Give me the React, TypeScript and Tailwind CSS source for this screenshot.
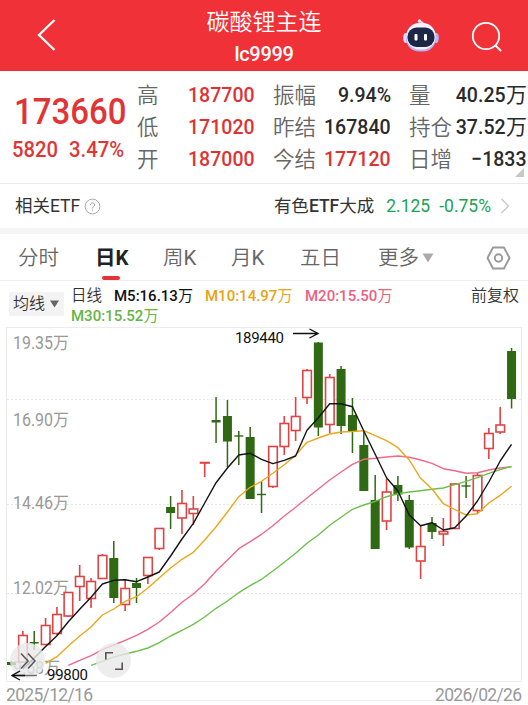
import React from 'react';

interface Candle {
  up: boolean;
  top: number;
  bottom: number;
  high: number;
  low: number;
}

interface Quote {
  label: string;
  value: string;
  unit?: string;
  color: string;
}

const STEP = 11.365;
const START = 11.5;

const xAt = (i: number) => START + i * STEP;

// [up, body top, body bottom, wick top, wick bottom]
const rawCandles: [number, number, number, number, number][] = [
  [0, 662, 665, 661, 666],
  [1, 635.5, 662, 631, 663],
  [0, 642, 643.5, 631, 650],
  [1, 625.5, 644.5, 618, 645],
  [1, 614.5, 633.5, 607, 635],
  [1, 592.5, 616, 592, 617],
  [1, 576.5, 586.5, 565, 601],
  [1, 581.5, 598.5, 578, 608],
  [1, 555.5, 578.5, 554, 579],
  [0, 558, 598, 541, 603],
  [1, 588.5, 604.5, 580, 611],
  [0, 583, 588, 578, 603],
  [1, 557.5, 575.5, 557, 584],
  [1, 528.5, 548.5, 528, 550],
  [0, 507, 513, 496, 529],
  [1, 503.5, 518, 490, 534],
  [1, 509, 513.5, 496, 525],
  [1, 462.5, 463, 462, 477],
  [0, 420, 422.5, 397, 443],
  [0, 416, 441.5, 400, 467],
  [0, 435.3, 436.7, 431, 465],
  [0, 437, 499, 427, 499],
  [0, 493.8, 495.2, 481, 513],
  [1, 446.5, 486.5, 446, 488],
  [1, 423.5, 446.5, 416, 455],
  [1, 416.5, 430.5, 397, 441],
  [1, 370.5, 397.5, 369, 404],
  [0, 342.5, 427.5, 342, 436],
  [1, 377.5, 424.5, 374, 433],
  [0, 369, 426, 366, 434],
  [0, 415, 431, 398, 453],
  [0, 445, 491, 431, 491],
  [0, 500, 549, 475, 549],
  [1, 492, 521, 479, 530],
  [0, 485, 494.5, 476, 501],
  [0, 500, 547.5, 495, 549],
  [1, 546.5, 561, 526, 579],
  [0, 523, 532, 517, 539],
  [1, 531.5, 534, 518, 546],
  [1, 484, 528.5, 483, 529],
  [0, 485.3, 486.7, 476, 498],
  [1, 475.5, 510.5, 473, 513],
  [1, 433.5, 448.5, 428, 459],
  [1, 425, 432, 407, 434],
  [0, 351, 399, 348, 408.5],
];

const candles: Candle[] = rawCandles.map(([up, top, bottom, high, low]) => ({ up: up === 1, top, bottom, high, low }));

const averages = [
  {
    color: '#f0688a',
    from: 5,
    ys: [665.3, 660.3, 655.7, 649.7, 645, 640.3, 635.3, 629.3, 622, 612.5, 602.3, 594, 583.7, 571, 560, 548.7, 541.7, 534.3, 525.7, 516, 507.3, 498, 489, 480, 472, 464.3, 459.3, 458.3, 457, 456, 457.3, 460, 463.3, 468.7, 470.7, 473.3, 472.7, 470, 468, 466.7],
  },
  {
    color: '#6cc04a',
    from: 7,
    ys: [665.3, 661.3, 657, 654, 651.3, 648, 642.7, 636, 630.3, 624.3, 617, 608.3, 601, 592.7, 585.7, 579.3, 571, 562.3, 553.3, 543.3, 535, 525.3, 517.3, 509.3, 505, 501.3, 496.7, 493.7, 492, 490.7, 489.3, 488, 484.7, 481.3, 477.7, 473.3, 469.7, 466.3],
  },
  {
    color: '#e9a71b',
    from: 3,
    ys: [663.3, 656.7, 646, 636, 627, 615, 609, 601.3, 596.7, 588, 578, 568, 559.3, 552.3, 540, 526.7, 512, 496.7, 487.3, 481.3, 473.3, 464.7, 455.3, 442.3, 438, 434, 432, 431.5, 430.7, 435.7, 440.7, 447.7, 460, 478.3, 489, 503.7, 509.5, 515, 513.7, 503, 495.3, 486.3],
  },
  {
    color: '#141414',
    from: 1,
    ys: [669, 658, 646.5, 635.7, 621.7, 609.3, 597.3, 584, 580.3, 579.7, 581.7, 577, 572, 556, 539, 523.3, 503, 482.7, 468, 455, 453.3, 459.3, 463.7, 460.3, 456, 430.3, 417.7, 403.7, 403.7, 406.7, 431, 454.3, 477.7, 491, 515, 525.7, 522.7, 530, 527.7, 516, 501, 482, 461, 444.3],
  },
];

const quotes: Quote[][] = [
  [
    { label: '高', value: '187700', color: 'text-[#dc3435]' },
    { label: '低', value: '171020', color: 'text-[#dc3435]' },
    { label: '开', value: '187000', color: 'text-[#dc3435]' },
  ],
  [
    { label: '振幅', value: '9.94%', color: 'text-[#2a2a2a]' },
    { label: '昨结', value: '167840', color: 'text-[#2a2a2a]' },
    { label: '今结', value: '177120', color: 'text-[#dc3435]' },
  ],
  [
    { label: '量', value: '40.25', unit: '万', color: 'text-[#2a2a2a]' },
    { label: '持仓', value: '37.52', unit: '万', color: 'text-[#2a2a2a]' },
    { label: '日增', value: '−1833', color: 'text-[#2a2a2a]' },
  ],
];

const columnClass = ['w-[118px]', 'ml-[18px] w-[118px]', 'ml-[18px] w-[118px]'];

const priceLabels = [
  { y: 349, value: '19.35', width: 56 },
  { y: 425.5, value: '16.90', width: 56 },
  { y: 509, value: '14.46', width: 56 },
  { y: 593.5, value: '12.02', width: 56 },
  { y: 674, value: '9.58', width: 47 },
];

const RobotIcon: React.FC = () => (
  <svg width="38" height="36" viewBox="0 0 38 36" fill="none">
    <path d="M22 8C22 4.500 20 3.500 16.500 3.500" stroke="#f3d3ea" strokeWidth="1.500" strokeLinecap="round" />
    <circle cx="17.500" cy="3" r="1.700" fill="#fbe9f4" />
    <ellipse cx="4" cy="20" rx="2.800" ry="5" fill="#dcd8fb" />
    <ellipse cx="34" cy="20" rx="2.800" ry="5" fill="#b9b4f5" />
    <rect x="4" y="6" width="30" height="27.500" rx="13" fill="#b7b0f5" />
    <rect x="4.500" y="5" width="29" height="26.500" rx="12.500" fill="#f3f1ff" />
    <rect x="5.500" y="9.500" width="27" height="19.500" rx="9" fill="#1c2748" />
    <rect x="12.500" y="16" width="3" height="6.500" rx="1" fill="#fff" />
    <rect x="22" y="16" width="3" height="6.500" rx="1" fill="#fff" />
  </svg>
);

const Header: React.FC = () => (
  <header className="flex h-[71px] items-center bg-[#f13138] text-white">
    <button className="flex w-[158px] pl-[36px]">
      <svg width="20" height="33" viewBox="0 0 20 33" fill="none">
        <path d="M18.500 1L3 16L18.500 31" stroke="#fff" strokeWidth="2.300" />
      </svg>
    </button>
    <div className="flex w-[212px] flex-col items-center pt-[5px]">
      <h1 className="text-[23px] leading-[32px] font-[350]">碳酸锂主连</h1>
      <span className="text-[20px] leading-[30px] font-medium tracking-[-0.3px]">lc9999</span>
    </div>
    <div className="ml-[32px] flex items-center">
      <RobotIcon />
      <svg className="mt-[2px] ml-[30px]" width="34" height="34" viewBox="0 0 34 34" fill="none">
        <circle cx="16" cy="16" r="13.200" stroke="#fff" strokeWidth="1.800" />
        <path d="M25 25L31 31" stroke="#fff" strokeWidth="2" />
      </svg>
    </div>
  </header>
);

const QuotePanel: React.FC = () => (
  <section className="relative flex h-[113px] border-b border-[#e9e9e9]">
    <div className="w-[137px] pt-[17px] text-[#e03537]">
      <div className="ml-[14px] w-[122px] origin-left scale-x-88 text-[37.500px] leading-[46px] font-medium">173660</div>
      <div className="ml-[12px] flex w-[122px] origin-left scale-x-92 gap-[12px] text-[22px] leading-[32px] font-medium">
        <span>5820</span>
        <span>3.47%</span>
      </div>
    </div>
    {quotes.map((column, i) => (
      <div key={i} className={`${columnClass[i]} pt-[9px]`}>
        {column.map((quote) => (
          <div key={quote.label} className="flex h-[32px] items-center justify-between whitespace-nowrap">
            <span className="text-[21.500px] font-[350] text-[#666]">{quote.label}</span>
            <span className={`flex items-center text-[21px] ${quote.color}`}>
              <span className="origin-right scale-x-93 font-medium">{quote.value}</span>
              {quote.unit && <span>{quote.unit}</span>}
            </span>
          </div>
        ))}
      </div>
    ))}
    <svg className="absolute right-[4px] bottom-[6px]" width="9" height="9" viewBox="0 0 9 9">
      <path d="M9 0V9H0Z" fill="#c8c8c8" />
    </svg>
  </section>
);

const RelatedEtf: React.FC = () => (
  <section className="flex h-[44px] items-center text-[17.500px] text-[#333]">
    <span className="pl-[15px]">相关ETF</span>
    <svg className="ml-[4px]" width="17" height="17" viewBox="0 0 17 17" fill="none">
      <circle cx="8.500" cy="8.500" r="7.400" stroke="#aaa" />
      <path d="M6.300 7.200C6.300 4.300 10.700 4.300 10.700 7C10.700 8.600 8.500 8.600 8.500 10.400M8.500 11.600V12.800" stroke="#aaa" />
    </svg>
    <span className="ml-auto">
      有色<span className="font-medium">ETF</span>大成
    </span>
    <span className="ml-[12px] text-[#1aa254]">2.125</span>
    <span className="ml-[9px] text-[#1aa254]">-0.75%</span>
    <svg className="mr-[17px] ml-[9px]" width="11" height="18" viewBox="0 0 11 18" fill="none">
      <path d="M1.500 2L8.500 9L1.500 16" stroke="#ccc" strokeWidth="1.500" />
    </svg>
  </section>
);

const Tabs: React.FC = () => (
  <nav className="flex h-[47px] items-center border-b border-[#eee] pt-[2px] text-[20.500px] font-[350] text-[#666]">
    <span className="w-[76px] pl-[18px]">分时</span>
    <span className="relative flex h-full w-[87px] items-center pl-[19px] font-bold text-[#222]">
      日K
      <i className="absolute bottom-0 left-[26px] h-[4px] w-[18px] rounded-full bg-[#e23337]" />
    </span>
    <span className="w-[68px]">周<span className="font-normal">K</span></span>
    <span className="w-[69px]">月<span className="font-normal">K</span></span>
    <span className="w-[78px]">五日</span>
    <span>更多</span>
    <svg className="ml-[3px]" width="12" height="10" viewBox="0 0 12 10">
      <path d="M0.500 0.500H11.500L6 9.500Z" fill="#aaa" />
    </svg>
    <svg className="mr-[17px] ml-auto" width="25" height="24" viewBox="0 0 25 24" fill="none">
      <path d="M7 1.500H18L23.500 12L18 22.500H7L1.500 12Z" stroke="#999" strokeWidth="1.900" strokeLinejoin="round" />
      <circle cx="12.500" cy="12" r="3.700" stroke="#999" strokeWidth="1.900" />
    </svg>
  </nav>
);

const Average: React.FC<{ value: string; className: string }> = ({ value, className }) => (
  <span className={className}>
    <span className="font-medium">{value}</span>万
  </span>
);

const Legend: React.FC = () => (
  <section className="flex h-[45px] text-[15px] leading-[20px] text-[#333]">
    <div className="mt-[11px] ml-[9px] flex h-[24px] w-[55px] items-center bg-[#f3f3f3] pl-[4px] text-[16px] font-[350]">
      均线
      <svg className="ml-[5px]" width="9" height="8" viewBox="0 0 9 8">
        <path d="M0 0.500H9L4.500 7.500Z" fill="#666" />
      </svg>
    </div>
    <div className="ml-[7px] pt-[5px] whitespace-nowrap">
      <div className="flex">
        <span className="w-[43px] text-[15.500px] font-[350]">日线</span>
        <Average value="M5:16.13" className="w-[91px] text-[#111]" />
        <Average value="M10:14.97" className="w-[100px] text-[#e9a314]" />
        <Average value="M20:15.50" className="text-[#ee5f80]" />
      </div>
      <Average value="M30:15.52" className="block text-[#66b545]" />
    </div>
    <span className="mr-[9px] ml-auto pt-[5px] text-[16px] font-[350]">前复权</span>
  </section>
);

const CandleShape: React.FC<{ candle: Candle; x: number }> = ({ candle, x }) => {
  const color = candle.up ? '#dd4444' : '#2f6913';
  if (candle.up) {
    return (
      <g stroke={color} strokeWidth="1.600">
        <path d={`M${x} ${candle.high}V${candle.top}M${x} ${candle.bottom}V${candle.low}`} />
        <rect x={x - 4.2} y={candle.top} width="8.600" height={candle.bottom - candle.top} fill="#fff" />
      </g>
    );
  }
  return (
    <g>
      <path d={`M${x} ${candle.high}V${candle.low}`} stroke={color} strokeWidth="1.500" />
      <rect x={x - 4.5} y={candle.top} width="9" height={candle.bottom - candle.top} fill={color} />
    </g>
  );
};

const Chart: React.FC = () => (
  <section className="relative">
    <svg className="block" width="528" height="379" viewBox="0 326 528 379" fill="none">
      <rect x="6.500" y="327.500" width="515" height="354" stroke="#ececec" />
      <path d="M7 700.500H522" stroke="#eee" />
      <path d="M7 399.500H521M7 504.500H521M7 593.500H521" stroke="#e6e6e6" strokeDasharray="2 2" />
      <g fontSize="17.500" fill="#999">
        {priceLabels.map((label) => (
          <text key={label.value} x="13" y={label.y} textLength={label.width} lengthAdjust="spacingAndGlyphs">
            {label.value}万
          </text>
        ))}
        <text x="6" y="700.500" textLength="87">2025/12/16</text>
        <text x="435" y="700.500" textLength="87">2026/02/26</text>
      </g>
      <clipPath id="plot">
        <rect x="7" y="328" width="514" height="353" />
      </clipPath>
      <g clipPath="url(#plot)">
        {candles.map((candle, i) => (
          <CandleShape key={i} candle={candle} x={xAt(i)} />
        ))}
        {averages.map((line) => (
          <polyline
            key={line.color}
            points={line.ys.map((y, i) => `${xAt(line.from + i)},${y}`).join(' ')}
            stroke={line.color}
            strokeWidth="1.400"
            strokeLinejoin="round"
          />
        ))}
      </g>
      <g fontSize="15" fill="#111">
        <text x="235" y="342.500" textLength="49">189440</text>
        <text x="47" y="680" textLength="41">99800</text>
      </g>
      <path d="M293 333.500H317M309.500 329L318 333.500L309.500 338" stroke="#111" strokeWidth="1.400" />
    </svg>
    <button className="absolute top-[317px] left-[10px] flex size-[35px] items-center justify-center rounded-full bg-[#e9e9e9]/80">
      <svg width="18" height="18" viewBox="0 0 18 18" fill="none">
        <path d="M2 1.500L9 9L2 16.500M9 1.500L16 9L9 16.500" stroke="#555" strokeWidth="1.500" />
      </svg>
    </button>
    <svg className="absolute top-[344px] left-[11px]" width="27" height="11" viewBox="0 0 27 11" fill="none">
      <path d="M26 5.500H1" stroke="#111" strokeOpacity="0.600" strokeWidth="1.400" />
      <path d="M14 5.500H1M9 1L1 5.500L9 10" stroke="#111" strokeWidth="1.400" />
    </svg>
    <button className="absolute top-[317px] left-[96px] flex size-[35px] items-center justify-center rounded-full bg-[#e9e9e9]/80">
      <svg width="20" height="20" viewBox="0 0 20 20" fill="none">
        <path d="M1.800 8.500V1.800H9M18.200 11.500V18.200H11" stroke="#555" strokeWidth="1.600" />
      </svg>
    </button>
  </section>
);

const App: React.FC = () => {
  return (
    <main className="h-[705px] w-[528px] overflow-hidden bg-white font-['Roboto','Noto_Sans_CJK_SC',sans-serif]">
      <Header />
      <QuotePanel />
      <RelatedEtf />
      <div className="h-[6px] bg-[#f5f5f5]" />
      <Tabs />
      <Legend />
      <Chart />
    </main>
  );
};

export default App;
